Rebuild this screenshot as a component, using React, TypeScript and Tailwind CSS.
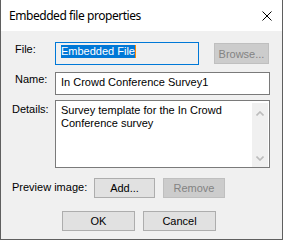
import React from "react";

const ui = { fontFamily: '"Liberation Sans", Arial, sans-serif', fontSize: "11px", lineHeight: "13px" } as const;

function Btn({ label, disabled, w }: { label: string; disabled?: boolean; w: string }) {
  return (
    <div
      className={
        disabled
          ? `${w} h-[20px] flex items-center justify-center border border-[#bfbfbf] bg-[#cccccc] text-[#838383]`
          : `${w} h-[20px] flex items-center justify-center border border-[#adadad] bg-[#e1e1e1] text-black`
      }
    >
      <span className="leading-[13px] pt-[1px]">{label}</span>
    </div>
  );
}

export default function App() {
  return (
    <div className="w-[283px] h-[240px] flex flex-col border-x border-b border-[#5f5f5f] bg-[#f0f0f0] overflow-hidden">
      <div className="h-[31px] bg-white flex items-center justify-between shrink-0">
        <span
          className="pl-[8px] text-black tracking-[-0.45px]"
          style={{ fontFamily: '"Noto Sans", "Open Sans", sans-serif', fontSize: "12px", lineHeight: "16px" }}
        >
          Embedded file properties
        </span>
        <svg width="10" height="10" viewBox="0 0 10 10" className="mr-[10px]">
          <path d="M0.5 0.5 L9.5 9.5 M9.5 0.5 L0.5 9.5" stroke="#000" strokeWidth="1" fill="none" />
        </svg>
      </div>
      <div className="flex flex-col text-black" style={ui}>
        {/* File row */}
        <div className="flex mt-[11px] h-[23px]">
          <span className="ml-[14px] w-[40px] mt-[1px]">File:</span>
          <div className="w-[144px] h-[23px] border border-[#0078d7] bg-[#f0f0f0] pt-[2px] pl-[5px]">
            <span className="inline-flex items-center h-[13px] bg-[#0078d7] text-white">Embedded File</span>
            <span className="inline-block w-[1px] h-[13px] align-top bg-[#ff8a00]" />
          </div>
          <div className="ml-[15px] mt-[1px]">
            <Btn label="Browse..." disabled w="w-[55px] h-[21px]" />
          </div>
        </div>
        {/* Name row */}
        <div className="flex mt-[7px] h-[23px]">
          <span className="ml-[14px] w-[40px] mt-[1px]">Name:</span>
          <div className="w-[215px] h-[23px] border border-[#7a7a7a] bg-white pt-[3px] pl-[5px]">
            In Crowd Conference Survey1
          </div>
        </div>
        {/* Details row */}
        <div className="flex mt-[5px] h-[68px]">
          <span className="ml-[11px] w-[43px] mt-[3px]">Details:</span>
          <div className="w-[215px] h-[68px] border border-[#7a7a7a] bg-white flex">
            <div className="flex-1 pt-[3px] pl-[5px] pr-[2px]">
              Survey template for the In Crowd Conference survey
            </div>
            <div className="w-[16px] mt-[2px] mb-[0px] mr-[1px] bg-[#f0f0f0] flex flex-col items-center justify-between pt-[8px] pb-[6px]">
              <svg width="8" height="5" viewBox="0 0 8 5">
                <path d="M0.5 4.5 L4 1 L7.5 4.5" stroke="#bcbcbc" strokeWidth="1.6" fill="none" />
              </svg>
              <svg width="8" height="5" viewBox="0 0 8 5">
                <path d="M0.5 0.5 L4 4 L7.5 0.5" stroke="#bcbcbc" strokeWidth="1.6" fill="none" />
              </svg>
            </div>
          </div>
        </div>
        {/* Preview row */}
        <div className="flex mt-[10px] h-[20px] items-start">
          <span className="ml-[11px] w-[82px] mt-[3px]">Preview image:</span>
          <Btn label="Add..." w="w-[61px]" />
          <div className="ml-[8px]">
            <Btn label="Remove" disabled w="w-[62px]" />
          </div>
        </div>
        {/* OK / Cancel */}
        <div className="flex mt-[13px] h-[20px] pl-[61px] gap-[8px]">
          <Btn label="OK" w="w-[73px]" />
          <Btn label="Cancel" w="w-[73px]" />
        </div>
      </div>
    </div>
  );
}
